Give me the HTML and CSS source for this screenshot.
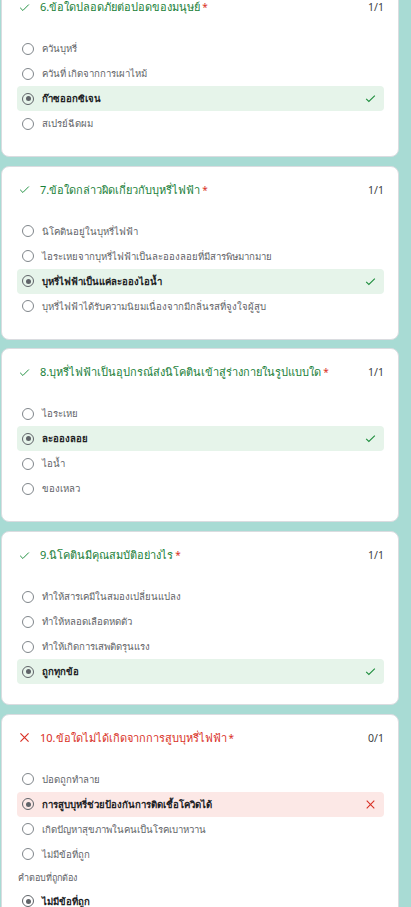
FILE: index.html
```html
<!DOCTYPE html>
<html lang="th">
<head>
<meta charset="utf-8">
<link rel="stylesheet" href="styles.css">
</head>
<body>
<div class="page">

  <section class="card">
    <div class="q-head">
      <svg class="q-icon ok" viewBox="0 0 24 24"><path d="M4 12.5l5 5L20 6.5"/></svg>
      <div class="q-title ok">6.ข้อใดปลอดภัยต่อปอดของมนุษย์<span class="star">*</span></div>
      <div class="score">1/1</div>
    </div>
    <div class="opts">
      <div class="opt"><span class="radio"></span><span class="txt">ควันบุหรี่</span></div>
      <div class="opt"><span class="radio"></span><span class="txt">ควันที่ เกิดจากการเผาไหม้</span></div>
      <div class="opt sel right"><span class="radio on"></span><span class="txt">ก๊าซออกซิเจน</span><svg class="mark ok" viewBox="0 0 24 24"><path d="M4 12.5l5 5L20 6.5"/></svg></div>
      <div class="opt"><span class="radio"></span><span class="txt">สเปรย์ฉีดผม</span></div>
    </div>
  </section>

  <section class="card">
    <div class="q-head">
      <svg class="q-icon ok" viewBox="0 0 24 24"><path d="M4 12.5l5 5L20 6.5"/></svg>
      <div class="q-title ok">7.ข้อใดกล่าวผิดเกี่ยวกับบุหรี่ไฟฟ้า<span class="star">*</span></div>
      <div class="score">1/1</div>
    </div>
    <div class="opts">
      <div class="opt"><span class="radio"></span><span class="txt">นิโคตินอยู่ในบุหรี่ไฟฟ้า</span></div>
      <div class="opt"><span class="radio"></span><span class="txt">ไอระเหยจากบุหรี่ไฟฟ้าเป็นละอองลอยที่มีสารพิษมากมาย</span></div>
      <div class="opt sel right"><span class="radio on"></span><span class="txt">บุหรี่ไฟฟ้าเป็นแค่ละอองไอน้ำ</span><svg class="mark ok" viewBox="0 0 24 24"><path d="M4 12.5l5 5L20 6.5"/></svg></div>
      <div class="opt"><span class="radio"></span><span class="txt">บุหรี่ไฟฟ้าได้รับความนิยมเนื่องจากมีกลิ่นรสที่จูงใจผู้สูบ</span></div>
    </div>
  </section>

  <section class="card">
    <div class="q-head">
      <svg class="q-icon ok" viewBox="0 0 24 24"><path d="M4 12.5l5 5L20 6.5"/></svg>
      <div class="q-title ok">8.บุหรี่ไฟฟ้าเป็นอุปกรณ์ส่งนิโคตินเข้าสู่ร่างกายในรูปแบบใด<span class="star">*</span></div>
      <div class="score">1/1</div>
    </div>
    <div class="opts">
      <div class="opt"><span class="radio"></span><span class="txt">ไอระเหย</span></div>
      <div class="opt sel right"><span class="radio on"></span><span class="txt">ละอองลอย</span><svg class="mark ok" viewBox="0 0 24 24"><path d="M4 12.5l5 5L20 6.5"/></svg></div>
      <div class="opt"><span class="radio"></span><span class="txt">ไอน้ำ</span></div>
      <div class="opt"><span class="radio"></span><span class="txt">ของเหลว</span></div>
    </div>
  </section>

  <section class="card">
    <div class="q-head">
      <svg class="q-icon ok" viewBox="0 0 24 24"><path d="M4 12.5l5 5L20 6.5"/></svg>
      <div class="q-title ok">9.นิโคตินมีคุณสมบัติอย่างไร<span class="star">*</span></div>
      <div class="score">1/1</div>
    </div>
    <div class="opts">
      <div class="opt"><span class="radio"></span><span class="txt">ทำให้สารเคมีในสมองเปลี่ยนแปลง</span></div>
      <div class="opt"><span class="radio"></span><span class="txt">ทำให้หลอดเลือดหดตัว</span></div>
      <div class="opt"><span class="radio"></span><span class="txt">ทำให้เกิดการเสพติดรุนแรง</span></div>
      <div class="opt sel right"><span class="radio on"></span><span class="txt">ถูกทุกข้อ</span><svg class="mark ok" viewBox="0 0 24 24"><path d="M4 12.5l5 5L20 6.5"/></svg></div>
    </div>
  </section>

  <section class="card">
    <div class="q-head">
      <svg class="q-icon bad" viewBox="0 0 24 24"><path d="M4.5 4.5l15 15M19.5 4.5l-15 15"/></svg>
      <div class="q-title bad">10.ข้อใดไม่ได้เกิดจากการสูบบุหรี่ไฟฟ้า<span class="star">*</span></div>
      <div class="score">0/1</div>
    </div>
    <div class="opts">
      <div class="opt"><span class="radio"></span><span class="txt">ปอดถูกทำลาย</span></div>
      <div class="opt sel wrong"><span class="radio on"></span><span class="txt">การสูบบุหรี่ช่วยป้องกันการติดเชื้อโควิดได้</span><svg class="mark bad" viewBox="0 0 24 24"><path d="M5 5l14 14M19 5L5 19"/></svg></div>
      <div class="opt"><span class="radio"></span><span class="txt">เกิดปัญหาสุขภาพในคนเป็นโรคเบาหวาน</span></div>
      <div class="opt"><span class="radio"></span><span class="txt">ไม่มีข้อที่ถูก</span></div>
    </div>
    <div class="answer-label">คำตอบที่ถูกต้อง</div>
    <div class="opts">
      <div class="opt sel"><span class="radio on"></span><span class="txt">ไม่มีข้อที่ถูก</span></div>
    </div>
  </section>

</div>
</body>
</html>
```

FILE: styles.css
```css
* { box-sizing: border-box; }
html, body {
  margin: 0;
  padding: 0;
  background: #a8dbd4;
  font-family: "Noto Sans", Roboto, sans-serif;
  color: #202124;
  overflow: hidden;
  height: 907px;
}
.page {
  display: flex;
  flex-direction: column;
  gap: 8.7px;
  width: 398px;
  margin-left: 1px;
  margin-top: -17px;
}
.card {
  background: #fff;
  border: 1px solid #dadce0;
  border-radius: 8px;
  padding: 12px 14px 20px 15px;
}
.q-head {
  display: flex;
  align-items: center;
  height: 22px;
}
.q-icon {
  width: 13px;
  height: 13px;
  flex: none;
  margin-left: 1px;
  margin-right: 9px;
  fill: none;
  stroke-width: 1.8;
}
.q-icon.ok { stroke: #1e8e3e; }
.q-icon.bad { stroke: #d93025; stroke-width: 2.2; }
.q-title {
  flex: 1;
  font-size: 11px;
  line-height: 22px;
  white-space: nowrap;
}
.q-title.ok { color: #188038; }
.q-title.bad { color: #d93025; }
.star { color: #d93025; margin-left: 2px; font-size: 10px; }
.score {
  font-size: 10.5px;
  color: #3c4043;
}
.opts {
  display: flex;
  flex-direction: column;
  margin-top: 18px;
}
.opt {
  display: flex;
  align-items: center;
  height: 25px;
  padding-left: 5px;
  padding-right: 7px;
  border-radius: 4px;
}
.opt.right { background: #e6f4ea; }
.opt.wrong { background: #fce8e6; }
.radio {
  width: 12px;
  height: 12px;
  border: 1.5px solid #80868b;
  border-radius: 50%;
  flex: none;
  margin-right: 8px;
  display: flex;
  align-items: center;
  justify-content: center;
}
.radio.on { border-color: #5f6368; }
.radio.on::after {
  content: "";
  width: 5px;
  height: 5px;
  border-radius: 50%;
  background: #5f6368;
}
.txt {
  flex: 1;
  font-size: 9.6px;
  color: #5f6368;
  white-space: nowrap;
}
.opt.sel .txt { font-weight: 700; color: #202124; }
.mark {
  width: 13px;
  height: 13px;
  flex: none;
  fill: none;
  stroke-width: 2;
}
.mark.ok { stroke: #1e8e3e; }
.mark.bad { stroke: #d93025; }
.answer-label {
  font-size: 9px;
  line-height: 14px;
  color: #5f6368;
  margin-top: 4px;
  margin-left: 1px;
}
.answer-label + .opts { margin-top: 4px; }
```
